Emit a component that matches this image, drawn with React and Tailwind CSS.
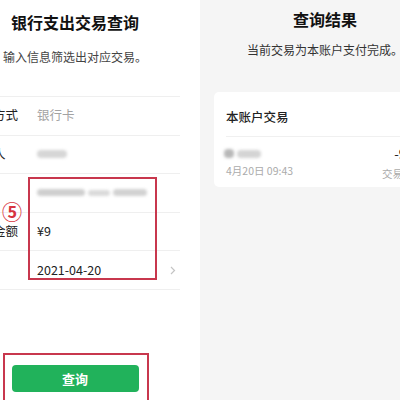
import React from "react";

const Blur = ({ className }) => (
  <div className={`rounded-sm blur-[1.5px] ${className}`} />
);

const rows = [
  { label: "支付方式", value: <span className="text-[#a3a3a3]">银行卡</span> },
  { label: "收款人", value: <Blur className="w-[30px] h-[8px] bg-[#d6d6d6]" /> },
  {
    label: "账号",
    value: (
      <div className="flex items-center gap-[3px]">
        <Blur className="w-[48px] h-[7px] bg-[#cfcfcf]" />
        <Blur className="w-[22px] h-[6px] bg-[#dadada]" />
        <Blur className="w-[34px] h-[7px] bg-[#d2d2d2]" />
      </div>
    ),
  },
  { label: "交易金额", value: <span className="text-[#222]">¥9</span> },
  { label: "日期", value: <span className="text-[#222]">2021-04-20</span>, arrow: true },
];

const QueryForm = () => (
  <div className="relative w-[250px] h-[400px] -ml-[50px] shrink-0 bg-white">
    <h1 className="mt-[11px] text-center text-[16px] leading-[22px] font-bold text-[#111]">
      银行支出交易查询
    </h1>
    <p className="mt-[16px] text-center text-[12px] leading-[16px] text-[#444]">
      输入信息筛选出对应交易。
    </p>

    <div className="mt-[31px] ml-[18px] mr-[20px] border-t border-[#efefef]">
      {rows.map((row) => (
        <div
          key={row.label}
          className="flex items-center h-[38.6px] border-b border-[#efefef] text-[12.5px]"
        >
          <span className="w-[69px] shrink-0 text-[#222]">{row.label}</span>
          <div className="flex-1">{row.value}</div>
          {row.arrow && (
            <svg width="6" height="9" viewBox="0 0 6 9" className="mr-[4px]">
              <path d="M1 1l3.5 3.5L1 8" fill="none" stroke="#c4c4c4" strokeWidth="1.2" />
            </svg>
          )}
        </div>
      ))}
    </div>

    <button className="block mx-auto mt-[75px] w-[127px] h-[27px] rounded-[4px] bg-[#21b25b] text-white text-[13px] font-bold">
      查询
    </button>

    {/* annotations */}
    <span className="absolute left-[52px] top-[201px] text-[20px] leading-[22px] font-bold text-[#d7343f]">
      ⑤
    </span>
    <div className="absolute left-[78px] top-[177px] w-[129px] h-[103px] border-2 border-[#c8374d]" />
    <div className="absolute left-[53px] top-[353px] w-[146px] h-[60px] border-2 border-[#c8374d]" />
  </div>
);

const Result = () => (
  <div className="w-[250px] h-[400px] shrink-0 bg-[#f5f5f5]">
    <h2 className="mt-[8px] text-center text-[16px] leading-[22px] font-bold text-[#111]">
      查询结果
    </h2>
    <p className="mt-[12px] text-center text-[12px] leading-[16px] text-[#333]">
      当前交易为本账户支付完成。
    </p>

    <div className="mt-[34px] mx-[14px] h-[95px] rounded-[5px] bg-white px-[12px]">
      <div className="pt-[16px] pb-[10px] leading-[18px] text-[12.5px] font-medium text-[#222] border-b border-[#f0f0f0]">
        本账户交易
      </div>
      <div className="flex justify-between pt-[12px]">
        <div>
          <div className="flex items-center gap-[3px] -ml-[2px]">
            <Blur className="w-[10px] h-[9px] bg-[#b8b8b8]" />
            <Blur className="w-[24px] h-[8px] bg-[#d4d4d4]" />
          </div>
          <div className="mt-[7px] text-[10.5px] leading-[12px] text-[#ababab]">
            4月20日 09:43
          </div>
        </div>
        <div className="text-right">
          <div className="text-[13px] leading-[10px] text-[#222]">-9.00</div>
          <div className="mt-[9px] text-[10.5px] leading-[12px] text-[#ababab]">交易成功</div>
        </div>
      </div>
    </div>
  </div>
);

export default function App() {
  return (
    <div className="flex w-[400px] h-[400px] overflow-hidden font-['Noto_Sans_CJK_SC',sans-serif]">
      <QueryForm />
      <Result />
    </div>
  );
}
